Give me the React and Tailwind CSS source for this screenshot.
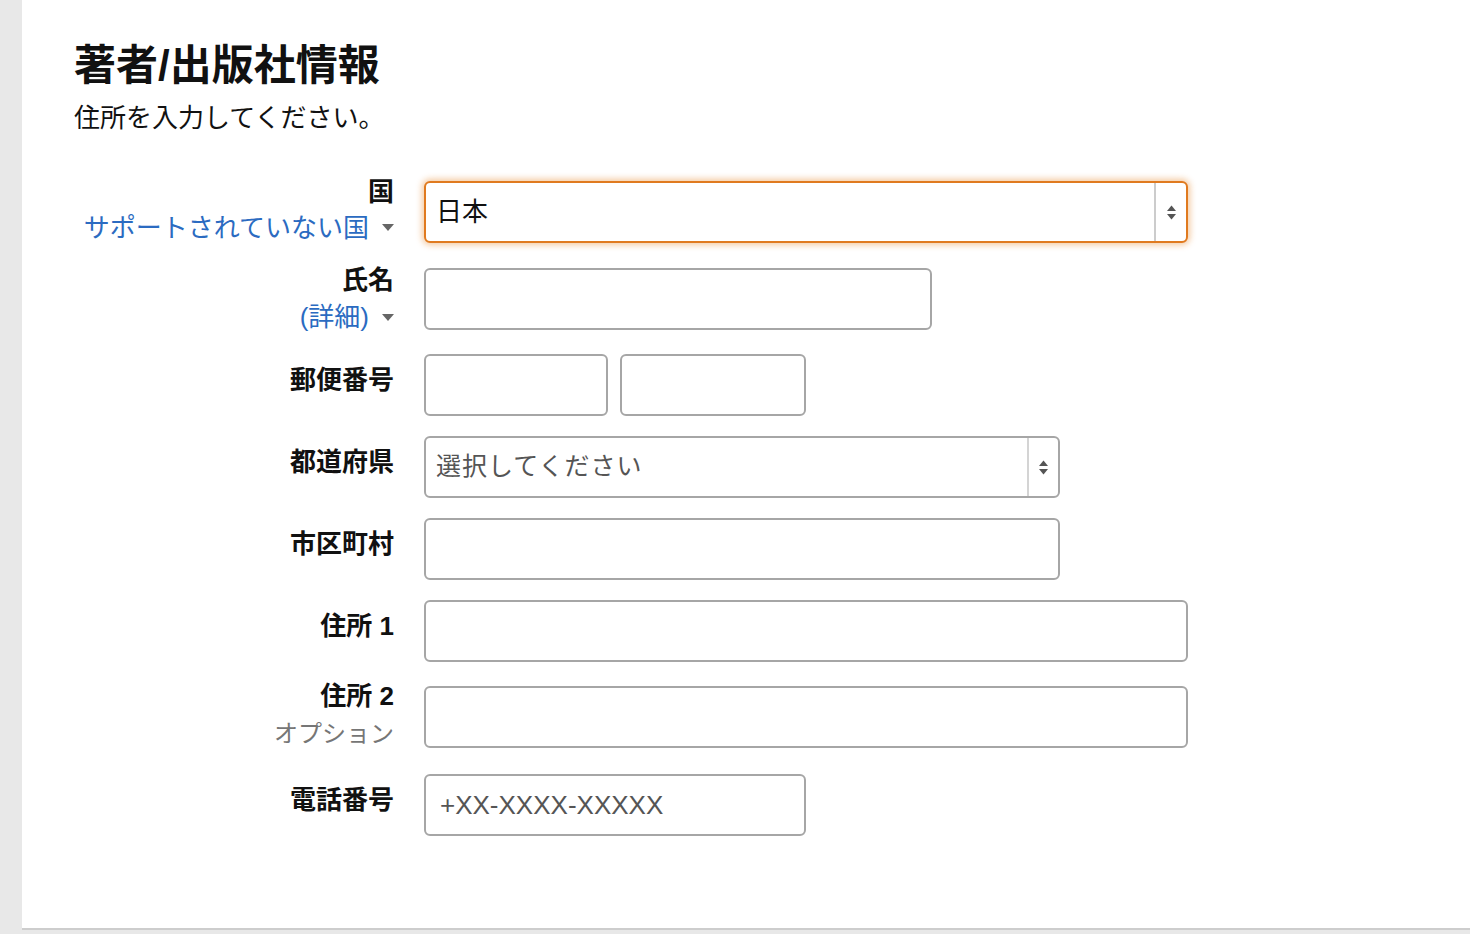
import React from "react";

const FONT = { fontFamily: '"Liberation Sans", "Noto Sans CJK JP", sans-serif' };

function Caret() {
  return (
    <svg width="12" height="8" viewBox="0 0 12 8" className="ml-[13px] inline-block">
      <path d="M0 0 L12 0 L6 7 Z" fill="#666" />
    </svg>
  );
}

function Stepper() {
  return (
    <svg width="11" height="17" viewBox="0 0 11 17">
      <path d="M1 7 L10 7 L5.5 1.5 Z" fill="#555" />
      <path d="M1 10 L10 10 L5.5 15.5 Z" fill="#555" />
    </svg>
  );
}

function Row({ mt, label, children, labelClass = "" }) {
  return (
    <div className={`flex h-[62px] items-center ${mt}`}>
      <div className={`w-[320px] flex flex-col items-end text-right ${labelClass}`}>{label}</div>
      <div className="ml-[30px] flex h-full items-center gap-[12px]">{children}</div>
    </div>
  );
}

function Input({ w, placeholder }) {
  return (
    <div className={`${w} h-[62px] rounded-[6px] border-2 border-[#a6a6a6] bg-white flex items-center px-[14px] text-[26px] text-[#555]`}>
      {placeholder}
    </div>
  );
}

export default function App() {
  return (
    <div className="min-h-screen bg-[#e8e8e8] pl-[22px]" style={FONT}>
      <div className="h-[930px] bg-white border-b-2 border-[#cdcdcd] pl-[52px] text-[#111]">
        <h1 className="pt-[37px] text-[42px] font-bold leading-[58px]">著者/出版社情報</h1>
        <p className="mt-[7px] text-[26px] leading-[32px]">住所を入力してください。</p>

        <div className="flex flex-col">
          <Row mt="mt-[47px]" labelClass="-mt-[4px]" label={
            <>
              <span className="text-[26px] font-bold leading-[36px]">国</span>
              <span className="text-[26px] leading-[36px] text-[#2b6bc1] flex items-center">サポートされていない国<Caret /></span>
            </>
          }>
            <div className="w-[764px] h-[62px] rounded-[6px] border-2 border-[#e07a1f] shadow-[0_0_6px_2px_rgba(228,121,17,0.4)] bg-white flex">
              <div className="flex-1 flex items-center pl-[10px] text-[26px] text-[#111]">日本</div>
              <div className="w-[32px] border-l-2 border-[#cccccc] flex items-center justify-center">
                <Stepper />
              </div>
            </div>
          </Row>

          <Row mt="mt-[25px]" label={
            <>
              <span className="text-[26px] font-bold leading-[37px]">氏名</span>
              <span className="text-[26px] leading-[37px] text-[#2b6bc1] flex items-center">(詳細)<Caret /></span>
            </>
          }>
            <Input w="w-[508px]" />
          </Row>

          <Row mt="mt-[24px]" labelClass="mb-[10px]" label={<span className="text-[26px] font-bold">郵便番号</span>}>
            <Input w="w-[184px]" />
            <Input w="w-[186px]" />
          </Row>

          <Row mt="mt-[20px]" labelClass="mb-[10px]" label={<span className="text-[26px] font-bold">都道府県</span>}>
            <div className="w-[636px] h-[62px] rounded-[6px] border-2 border-[#a6a6a6] bg-white flex">
              <div className="flex-1 flex items-center pl-[10px] text-[25px] text-[#555] tracking-[1px]">選択してください</div>
              <div className="w-[31px] border-l-2 border-[#d4d4d4] flex items-center justify-center">
                <Stepper />
              </div>
            </div>
          </Row>

          <Row mt="mt-[20px]" labelClass="mb-[10px]" label={<span className="text-[26px] font-bold">市区町村</span>}>
            <Input w="w-[636px]" />
          </Row>

          <Row mt="mt-[20px]" labelClass="mb-[10px]" label={<span className="text-[26px] font-bold">住所 1</span>}>
            <Input w="w-[764px]" />
          </Row>

          <Row mt="mt-[24px]" labelClass="-mt-[4px]" label={
            <>
              <span className="text-[26px] font-bold leading-[38px]">住所 2</span>
              <span className="text-[24px] leading-[38px] text-[#767676]">オプション</span>
            </>
          }>
            <Input w="w-[764px]" />
          </Row>

          <Row mt="mt-[26px]" labelClass="mb-[10px]" label={<span className="text-[26px] font-bold">電話番号</span>}>
            <Input w="w-[382px]" placeholder="+XX-XXXX-XXXXX" />
          </Row>
        </div>
      </div>
    </div>
  );
}
